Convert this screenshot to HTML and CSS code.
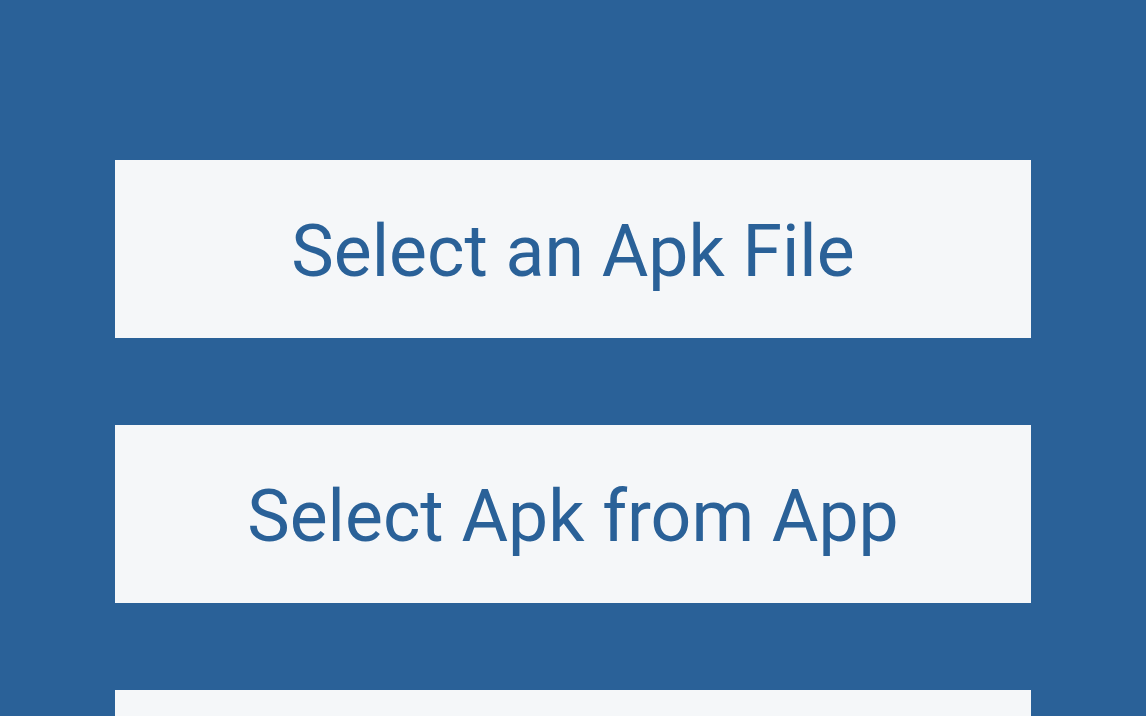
FILE: index.html
```html
<!DOCTYPE html>
<html lang="en">
<head>
    <meta charset="UTF-8">
    <title>Apk Picker</title>
    <link rel="stylesheet" href="styles.css">
</head>
<body>
    <div class="menu">
        <button class="btn">Select an Apk File</button>
        <button class="btn">Select Apk from App</button>
        <button class="btn"></button>
    </div>
</body>
</html>
```

FILE: styles.css
```css
body {
    margin: 0;
    height: 100vh;
    overflow: hidden;
    background-color: #2a6198;
    font-family: Roboto, 'Noto Sans', sans-serif;
}
.menu {
    display: flex;
    flex-direction: column;
    gap: 87px;
    padding: 160px 0 0 115px;
}
.btn {
    width: 916px;
    height: 178px;
    flex-shrink: 0;
    border: none;
    border-radius: 0;
    background-color: #f5f7f9;
    color: #2a6198;
    font-family: Roboto, 'Noto Sans', sans-serif;
    font-size: 71.5px;
    padding: 4px 0 0;
    cursor: pointer;
}
```
